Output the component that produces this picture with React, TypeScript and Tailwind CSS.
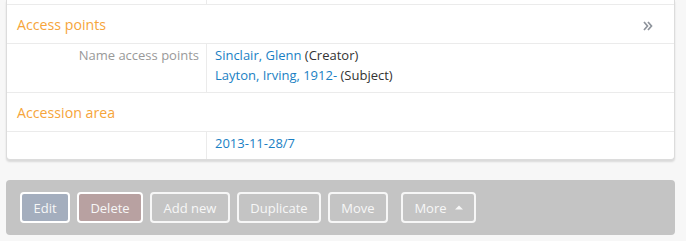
import React from "react";

export default function App() {
  const font = { fontFamily: '"Open Sans", "Liberation Sans", sans-serif' };
  return (
    <div className="w-[686px] h-[241px] overflow-hidden bg-[#f7f7f7] pl-[6px] pr-[11px]" style={font}>
      <div className="bg-white border-x border-b border-[#dcdcdc] rounded-b-[4px] shadow-[0_2px_2px_rgba(0,0,0,0.12)]">
        <div className="flex h-[5px] border-b border-[#ebebeb]">
          <div className="w-[200px] border-r border-[#ebebeb]" />
          <div className="flex-1" />
        </div>
        <div className="flex items-center justify-between pl-[10px] pr-[21px] pt-[10px] pb-[8px] border-b border-[#ebebeb] text-[14.2px] leading-[20px]">
          <span className="text-[#f6a53a]">Access points</span>
          <svg width="10" height="10" viewBox="0 0 10 10" className="mt-[1px]">
            <path d="M1 1 L4.5 5 L1 9 M5 1 L8.5 5 L5 9" fill="none" stroke="#8e939b" strokeWidth="1.7" />
          </svg>
        </div>
        <div className="flex border-b border-[#ebebeb] text-[13px] leading-[20px]">
          <div className="w-[200px] border-r border-[#ebebeb] text-right pr-[7px] pt-[1px] pb-[7px] text-[#999]">Name access points</div>
          <div className="flex-1 pl-[8px] pt-[1px] pb-[7px] text-[#333]">
            <div><span className="text-[#1a7fc4]">Sinclair, Glenn</span> (Creator)</div>
            <div><span className="text-[#1a7fc4]">Layton, Irving, 1912-</span> (Subject)</div>
          </div>
        </div>
        <div className="pl-[10px] pt-[10px] pb-[8px] border-b border-[#ebebeb] text-[14.2px] leading-[20px] text-[#f6a53a]">
          Accession area
        </div>
        <div className="flex text-[13px] leading-[20px]">
          <div className="w-[200px] border-r border-[#ebebeb] pt-[1px] pb-[6px]" />
          <div className="flex-1 pl-[8px] pt-[1px] pb-[6px] text-[#1a7fc4]">2013-11-28/7</div>
        </div>
      </div>
      <div className="mt-[20px] h-[55px] bg-[#c4c4c4] rounded-[4px] flex items-center pl-[14px] text-[13px] leading-[20px] text-[#f7f7f7]">
        <div className="flex gap-[7px]">
          <span className="h-[31px] w-[50px] justify-center flex items-center border-2 border-white rounded-[4px] bg-[#a4aebe]">Edit</span>
          <span className="h-[31px] w-[66px] justify-center flex items-center border-2 border-white rounded-[4px] bg-[#b8a1a1]">Delete</span>
          <span className="h-[31px] w-[80px] justify-center flex items-center border-2 border-[#f7f7f7] rounded-[4px]">Add new</span>
          <span className="h-[31px] w-[84px] justify-center flex items-center border-2 border-[#f7f7f7] rounded-[4px]">Duplicate</span>
          <span className="h-[31px] w-[60px] justify-center flex items-center border-2 border-[#f7f7f7] rounded-[4px]">Move</span>
        </div>
        <span className="ml-[13px] h-[31px] w-[75px] justify-center flex items-center gap-[8px] border-2 border-[#f7f7f7] rounded-[4px]">
          More
          <svg width="8" height="5" viewBox="0 0 8 5"><path d="M0 4.5 L4 0.5 L8 4.5 Z" fill="#f7f7f7" /></svg>
        </span>
      </div>
    </div>
  );
}
